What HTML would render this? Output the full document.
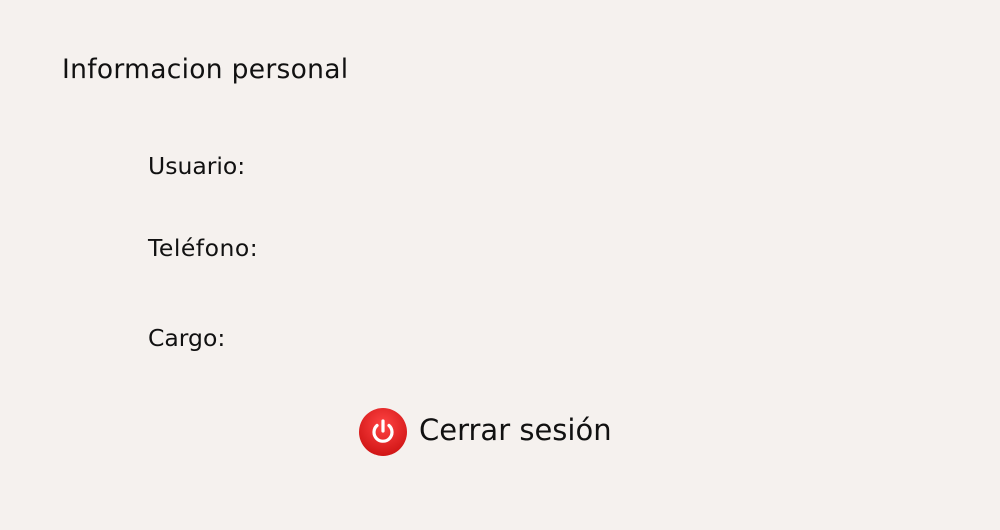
<!DOCTYPE html>
<html><head><meta charset="utf-8"><style>
body{margin:0;width:1000px;height:530px;background:#f5f1ee;font-family:"DejaVu Sans",sans-serif;color:#111;position:relative;overflow:hidden}
.t{position:absolute;white-space:nowrap}
</style></head><body>
<div class="t" style="left:62px;top:54px;font-size:26.5px;letter-spacing:0.3px">Informacion personal</div>
<div class="t" style="left:148px;top:152px;font-size:23.5px">Usuario:</div>
<div class="t" style="left:148px;top:234px;font-size:23.5px;letter-spacing:0.5px">Teléfono:</div>
<div class="t" style="left:148px;top:324px;font-size:23.5px">Cargo:</div>
<svg class="t" style="left:358px;top:407px" width="50" height="50" viewBox="0 0 50 50">
<defs><radialGradient id="g" cx="50%" cy="35%" r="65%"><stop offset="0" stop-color="#f44"/><stop offset="1" stop-color="#d01515"/></radialGradient></defs>
<circle cx="25" cy="25" r="24" fill="url(#g)"/>
<path d="M19 18.5 A9 9 0 1 0 31 18.5" fill="none" stroke="#fff" stroke-width="3.2" stroke-linecap="round"/>
<line x1="25" y1="14" x2="25" y2="24" stroke="#fff" stroke-width="3.2" stroke-linecap="round"/>
</svg>
<div class="t" style="left:419px;top:413px;font-size:29px">Cerrar sesión</div>
</body></html>
